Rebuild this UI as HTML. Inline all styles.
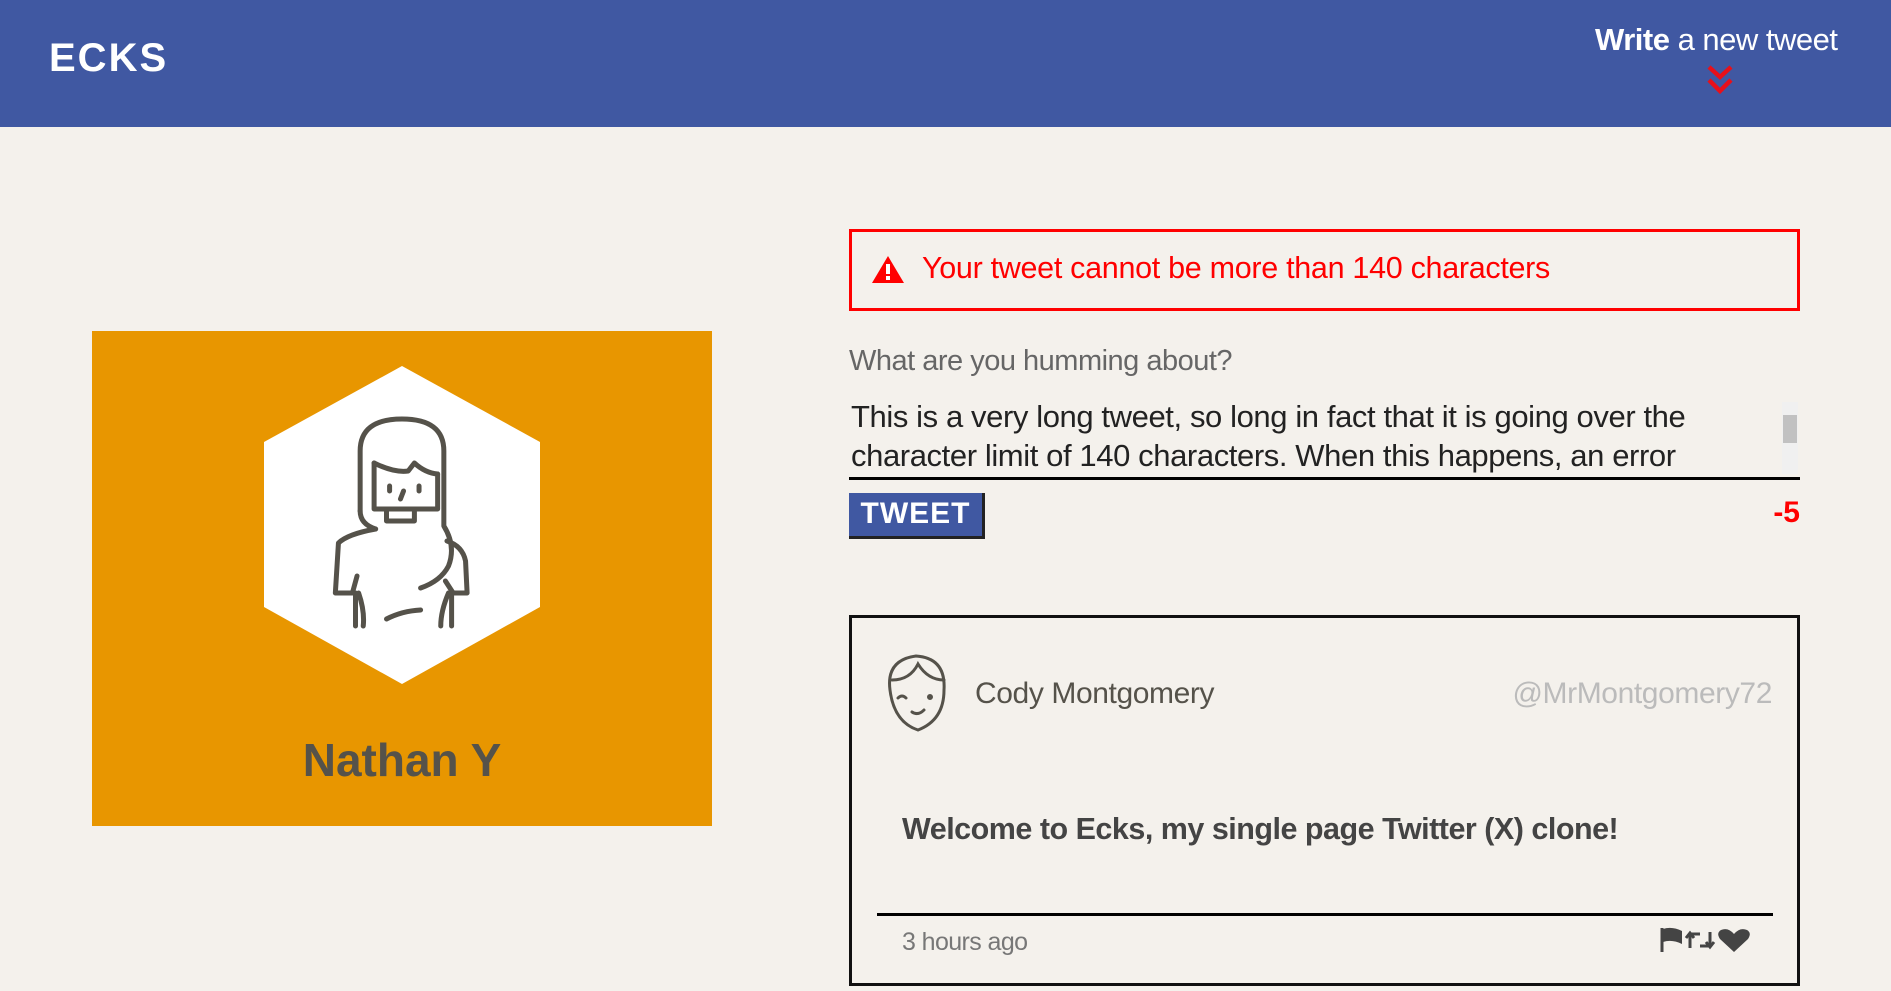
<!DOCTYPE html>
<html><head><meta charset="utf-8"><style>
*{margin:0;padding:0;box-sizing:border-box}
body{width:1891px;height:991px;background:#f4f1ec;font-family:"Liberation Sans",sans-serif;position:relative;overflow:hidden;color:#55524a}
.hdr{position:absolute;left:0;top:0;width:1891px;height:127px;background:#4058a2}
.logo{position:absolute;left:49px;top:36px;color:#fff;font-weight:bold;font-size:40px;letter-spacing:2px}
.write{position:absolute;left:1595px;top:22px;color:#fff;font-size:31px;white-space:nowrap;letter-spacing:-0.5px}
.abs{position:absolute;white-space:nowrap}
.card{position:absolute;left:92px;top:331px;width:620px;height:495px;background:#e89600}
</style></head><body>
<div class="hdr">
<div class="logo">ECKS</div>
<div class="write"><b>Write</b> a new tweet</div>
<svg class="abs" style="left:1706px;top:64px" width="28" height="32" viewBox="0 0 28 32"><path d="M3 3 L14 13 L25 3 M3 16 L14 27 L25 16" stroke="#e8101a" stroke-width="4.5" fill="none"/></svg>
</div>

<div class="card">
<svg style="position:absolute;left:0;top:0" width="620" height="495">
<polygon points="310,35 448,111 448,276 310,353 172,276 172,111" fill="#fff"/>
<g transform="translate(310,0) scale(1.55,1) translate(-310,0)" fill="none" stroke="#55524a" stroke-width="5" stroke-linecap="round" stroke-linejoin="round">
<path vector-effect="non-scaling-stroke" d="M283 180 V120 Q283 88 310 88 Q337 88 337 120 V195 Q345 215 340 235 Q335 250 322 257"/>
<path vector-effect="non-scaling-stroke" d="M283 180 Q283 193 293 198"/>
<path vector-effect="non-scaling-stroke" d="M292 132 Q305 142 314 140 L318 132 Q325 142 333 143"/>
<path vector-effect="non-scaling-stroke" d="M292 132 V178 H333 V143"/>
<path vector-effect="non-scaling-stroke" d="M300 178 V190 H318 V178"/>
<path vector-effect="non-scaling-stroke" d="M302 155 V160 M321 155 V160 M311 160 L309 168"/>
<path vector-effect="non-scaling-stroke" d="M293 198 Q275 203 269 212 L267 262 H278 L281 245"/>
<path vector-effect="non-scaling-stroke" d="M339 210 Q349 215 351 230 L352 262 H343 L338 250"/>
<path vector-effect="non-scaling-stroke" d="M280 262 V295 M282 262 Q286 280 285 295 M342 262 V295 M340 262 Q335 280 335 295"/>
<path vector-effect="non-scaling-stroke" d="M300 288 Q310 280 322 279"/>
</g>
</svg>
<div class="abs" style="left:0;width:620px;text-align:center;top:402px;font-size:46px;font-weight:bold;color:#55524a">Nathan Y</div>
</div>

<div class="abs" style="left:849px;top:229px;width:951px;height:82px;border:3px solid #f00"></div>
<svg class="abs" style="left:871px;top:254px" width="34" height="30" viewBox="0 0 34 30"><path d="M17 2 L33 29 H1 Z" fill="#f00"/><rect x="15" y="10" width="4" height="10" fill="#fff"/><rect x="15" y="22" width="4" height="4" fill="#fff"/></svg>
<div class="abs" style="left:922px;top:251px;font-size:30.5px;color:#f00;letter-spacing:-0.3px">Your tweet cannot be more than 140 characters</div>

<div class="abs" style="left:849px;top:345px;font-size:29px;color:#666;letter-spacing:-0.5px">What are you humming about?</div>
<div class="abs" style="left:851px;top:397px;font-size:31px;color:#222;line-height:39px;letter-spacing:-0.4px">This is a very long tweet, so long in fact that it is going over the<br>character limit of 140 characters. When this happens, an error</div>
<div class="abs" style="left:1782px;top:402px;width:16px;height:72px;background:#f0f0f0"></div>
<div class="abs" style="left:1783px;top:415px;width:14px;height:28px;background:#c1c1c1"></div>
<div class="abs" style="left:849px;top:477px;width:951px;height:3px;background:#000"></div>
<div class="abs" style="left:849px;top:493px;width:136px;height:46px;background:#4058a2;border-right:3px solid #222;border-bottom:3px solid #222;color:#fff;font-weight:bold;font-size:30px;text-align:center;line-height:42px;letter-spacing:1px">TWEET</div>
<div class="abs" style="left:1762px;top:496px;width:38px;text-align:right;font-size:30px;font-weight:bold;color:#f00">-5</div>

<div class="abs" style="left:849px;top:615px;width:951px;height:371px;border:3px solid #111"></div>
<svg class="abs" style="left:880px;top:650px" width="76" height="84" viewBox="0 0 76 84"><g fill="none" stroke="#55524a" stroke-width="3" stroke-linecap="round"><path d="M10 40 Q6 10 36 6 Q66 8 64 40 Q64 70 38 80 Q14 72 10 40 Z"/><path d="M12 30 Q30 30 38 14 Q48 30 64 30"/><path d="M18 48 Q22 44 26 48"/><circle cx="50" cy="47" r="1.5"/><path d="M32 62 Q38 66 44 60"/></g></svg>
<div class="abs" style="left:975px;top:677px;font-size:30px;color:#55524a;letter-spacing:-0.4px">Cody Montgomery</div>
<div class="abs" style="left:1484px;top:677px;width:288px;text-align:right;font-size:30px;color:#bbb;letter-spacing:-0.4px">@MrMontgomery72</div>
<div class="abs" style="left:902px;top:812px;font-size:30.5px;font-weight:bold;color:#444;letter-spacing:-0.5px">Welcome to Ecks, my single page Twitter (X) clone!</div>
<div class="abs" style="left:877px;top:913px;width:896px;height:3px;background:#000"></div>
<div class="abs" style="left:902px;top:928px;font-size:25px;color:#777;letter-spacing:-0.6px">3 hours ago</div>
<svg class="abs" style="left:1660px;top:926px" width="92" height="28" viewBox="0 0 92 28"><path d="M2 2 V26" stroke="#444" stroke-width="3"/><path d="M3 3 Q12 0 22 5 V18 Q12 13 3 16Z" fill="#444"/><g stroke="#444" stroke-width="3" fill="none"><path d="M30 22 V8 H40 M26 12 L30 7 L34 12"/><path d="M50 6 V20 H40 M46 16 L50 21 L54 16"/></g><path d="M74 26 L60 13 Q56 7 61 4 Q68 1 74 8 Q80 1 87 4 Q92 7 88 13 Z" fill="#444"/></svg>
</body></html>
